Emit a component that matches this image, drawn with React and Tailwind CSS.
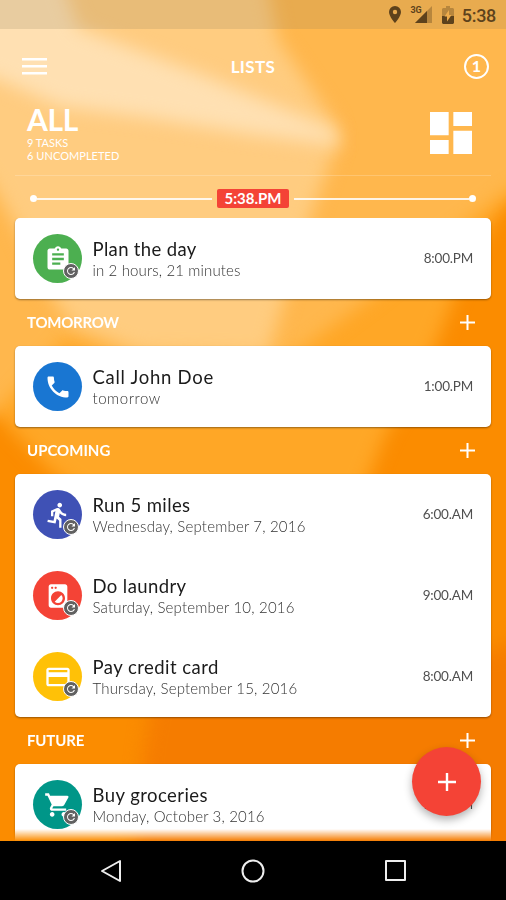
import {
  MdAssignment,
  MdCreditCard,
  MdDashboard,
  MdDirectionsRun,
  MdLocalLaundryService,
  MdPhone,
  MdRefresh,
  MdShoppingCart,
} from "react-icons/md";

const sections = [
  {
    id: "today",
    tasks: [
      { title: "Plan the day", titleClass: "tracking-[0.34px]", due: "in 2 hours, 21 minutes", dueClass: "tracking-[0.14px]", time: "8:00.PM", icon: MdAssignment, color: "bg-[#4caf50]", repeat: true },
    ],
  },
  {
    id: "tomorrow",
    label: "TOMORROW",
    labelClass: "tracking-[-0.25px]",
    tasks: [
      { title: "Call John Doe", titleClass: "tracking-[0.72px]", due: "tomorrow", dueClass: "tracking-[0.55px]", time: "1:00.PM", icon: MdPhone, color: "bg-[#1976d2]", repeat: false },
    ],
  },
  {
    id: "upcoming",
    label: "UPCOMING",
    labelClass: "tracking-[0px]",
    tasks: [
      { title: "Run 5 miles", titleClass: "tracking-[0.37px]", due: "Wednesday, September 7, 2016", dueClass: "tracking-[0.19px]", time: "6:00.AM", icon: MdDirectionsRun, color: "bg-[#3f51b5]", repeat: true },
      { title: "Do laundry", titleClass: "tracking-[0.4px]", due: "Saturday, September 10, 2016", dueClass: "tracking-[0.19px]", time: "9:00.AM", icon: MdLocalLaundryService, color: "bg-[#f44336]", repeat: true },
      { title: "Pay credit card", titleClass: "tracking-[0.46px]", due: "Thursday, September 15, 2016", dueClass: "tracking-[0.17px]", time: "8:00.AM", icon: MdCreditCard, color: "bg-[#ffc107]", repeat: true },
    ],
  },
  {
    id: "future",
    label: "FUTURE",
    labelClass: "tracking-[-0.15px]",
    tasks: [
      { title: "Buy groceries", titleClass: "tracking-[0.44px]", due: "Monday, October 3, 2016", dueClass: "tracking-[0.18px]", time: "9:00.AM", icon: MdShoppingCart, color: "bg-[#009688]", repeat: true },
    ],
  },
];

function Wallpaper() {
  return (
    <svg className="absolute inset-0" width="506" height="900" viewBox="0 0 506 900">
      <defs>
        <filter id="soft" x="-20%" y="-20%" width="140%" height="140%" colorInterpolationFilters="sRGB">
          <feGaussianBlur stdDeviation="9" />
        </filter>
      </defs>
      <rect width="506" height="900" fill="#fb8c00" />
      {/* each facet is blurred on its own so overlapping edges stay soft */}
      <path filter="url(#soft)" d="M-60 -60H580V150L506 204L468 260L436 345L385 435L360 500L90 500L50 470L0 418L-60 380Z" fill="#ffa726" />
      <path filter="url(#soft)" d="M-60 -60H580V150L506 192L430 250L370 298L300 350L270 365L150 365L65 338L22 385L-5 412L-60 400Z" fill="#ffb74d" />
      <path filter="url(#soft)" d="M-60 -60H258L278 40L334 122L337 145L318 195L300 250L284 300L268 355L140 352L72 325L50 294L18 230L-2 195L-60 110Z" fill="#ffcc80" />
      <path filter="url(#soft)" d="M-60 -60H48L78 28L200 74L336 130L340 146L250 134L150 118L60 106L0 80L-60 60Z" fill="#ffe0b2" />
      <path filter="url(#soft)" d="M580 590L500 650L400 660L155 690L145 745L125 960H580Z" fill="#f57c00" />
    </svg>
  );
}

function StatusBar() {
  return (
    <div className="flex h-[29px] shrink-0 items-center justify-end bg-[#8b7b5c]/20 pr-[10px] text-[#5d421c]">
      <svg width="12" height="17" viewBox="0 0 12 17" className="mr-[9px]">
        <path d="M6 0a6 6 0 0 0-6 6c0 4.500 6 11 6 11s6-6.500 6-11a6 6 0 0 0-6-6Zm0 8.200a2.200 2.200 0 1 1 0-4.400 2.200 2.200 0 0 1 0 4.400Z" fill="currentColor" />
      </svg>
      <span className="self-start pt-[5px] font-['Roboto'] text-[9px] leading-[10px] font-bold">3G</span>
      <svg width="17" height="17" viewBox="0 0 17 17" className="-ml-[7px] mr-[10px]">
        <path d="M17 0v17H0Z" fill="currentColor" opacity=".35" />
        <path d="M12 5v12H0Z" fill="currentColor" />
      </svg>
      <svg width="12" height="18" viewBox="0 0 12 18" className="mr-[8px]">
        <path d="M4 0h4v2h3l1 1v7H0V3l1-1h3Z" fill="currentColor" opacity=".35" />
        <path d="M0 10h12v7l-1 1H1l-1-1Z" fill="currentColor" />
        <path d="M7 4v5h2.500L5 15.500v-5H2.500Z" fill="#eeac4c" />
      </svg>
      <span className="pt-[2px] font-['Roboto'] text-[18px] leading-5 font-medium tracking-[-0.3px]">5:38</span>
    </div>
  );
}

function Plus({ size = 15, width = 2 }) {
  return (
    <svg width={size} height={size} viewBox={`0 0 ${size} ${size}`} stroke="#fff" strokeWidth={width}>
      <path d={`M0 ${size / 2}H${size}M${size / 2} 0V${size}`} />
    </svg>
  );
}

function TaskRow({ task }) {
  const Icon = task.icon;

  return (
    <div className="flex h-[81px] items-center pr-[18px] pl-[18px]">
      <div className={`relative flex size-[49px] shrink-0 items-center justify-center rounded-full ${task.color}`}>
        <Icon className="size-7 text-white" />
        {task.repeat && (
          <span className="absolute right-[3px] bottom-[4px] flex size-4 items-center justify-center rounded-full border-[1.5px] border-white bg-[#616161]">
            <MdRefresh className="size-3 shrink-0 text-white" />
          </span>
        )}
      </div>
      <div className="ml-[10.5px] flex-1 whitespace-nowrap">
        <p className={`text-[18.5px] leading-6 text-[#1b1b1b] ${task.titleClass}`}>{task.title}</p>
        <p className={`-mt-px mb-px text-[15px] leading-5 font-light text-[#333] ${task.dueClass}`}>{task.due}</p>
      </div>
      <span className="pb-px text-[13.5px] tracking-[-0.2px] text-[#505050]">{task.time}</span>
    </div>
  );
}

function Section({ section }) {
  return (
    <section>
      {section.label && (
        <div className="flex h-[47px] items-center justify-between pr-4 pl-3">
          <h2 className={`text-[15px] font-bold text-white ${section.labelClass}`}>{section.label}</h2>
          <Plus />
        </div>
      )}
      <div className="rounded-[5px] bg-white shadow-[0_1px_2px_rgba(0,0,0,0.4)]">
        {section.tasks.map((task) => (
          <TaskRow key={task.title} task={task} />
        ))}
      </div>
    </section>
  );
}

function NavBar() {
  return (
    <nav className="relative flex h-[59px] shrink-0 items-center justify-between bg-black pr-[100px] pl-[99.5px]">
      <svg width="22" height="24" viewBox="0 0 22 24" fill="none" stroke="#eee" strokeWidth="2" strokeLinejoin="round">
        <path d="M20 2V22L2 12Z" />
      </svg>
      <svg width="24" height="24" viewBox="0 0 24 24" fill="none" stroke="#eee" strokeWidth="2" className="-ml-px">
        <circle cx="12" cy="12" r="10.500" />
      </svg>
      <svg width="21" height="21" viewBox="0 0 21 21" fill="none" stroke="#eee" strokeWidth="2" strokeLinejoin="round">
        <rect x="1" y="1" width="19" height="19" />
      </svg>
    </nav>
  );
}

export default function App() {
  return (
    <div className="relative flex h-[900px] w-[506px] flex-col overflow-hidden font-['Lato','Noto_Sans',sans-serif]">
      <Wallpaper />
      <div className="relative flex min-h-0 flex-1 flex-col">
        <StatusBar />

        <header className="flex h-[75px] shrink-0 items-center justify-between pr-[17px] pl-[22px] text-white">
          <svg width="25" height="17" viewBox="0 0 25 17" fill="#fff">
            <path d="M0 0h25v2.600H0zM0 7h25v2.600H0zM0 14h25v2.600H0z" />
          </svg>
          <h1 className="mr-[5px] text-[17px] font-bold tracking-[0.4px]">LISTS</h1>
          <span className="flex size-[25px] items-center justify-center rounded-full border-2 border-white pb-px text-[16px] leading-none font-bold">1</span>
        </header>

        <div className="mx-[15px] flex h-[72px] shrink-0 justify-between border-b border-white/20 pr-3 pl-3 text-white">
          <div>
            <p className="-mt-px mb-px text-[30px] leading-[33px] font-bold tracking-[-0.3px]">ALL</p>
            <p className="-mt-px text-[11px] leading-[13px]">9 TASKS</p>
            <p className="text-[11px] leading-[13px] tracking-[0.05px]">6 UNCOMPLETED</p>
          </div>
          <MdDashboard className="mt-[1px] size-14" />
        </div>

        <div className="flex h-[42px] shrink-0 items-center px-[30px] pt-[3px]">
          <span className="size-[7px] rounded-full bg-white" />
          <span className="h-[2px] flex-1 bg-white/85" />
          <span className="mx-[5px] flex h-[19px] w-[72px] items-center justify-center rounded-[2px] bg-[#f44336] text-[15px] font-bold text-white">5:38.PM</span>
          <span className="h-[2px] flex-1 bg-white/85" />
          <span className="size-[7px] rounded-full bg-white" />
        </div>

        <main className="min-h-0 flex-1 overflow-hidden px-[15px] [mask-image:linear-gradient(to_bottom,#000_calc(100%-12px),transparent)]">
          {sections.map((section) => (
            <Section key={section.id} section={section} />
          ))}
        </main>
      </div>

      <NavBar />

      <button className="absolute right-[25px] bottom-[84px] flex size-[69px] items-center justify-center rounded-full bg-[#f44336] shadow-[0_4px_8px_rgba(0,0,0,0.3)]">
        <Plus size={18} width={2.4} />
      </button>
    </div>
  );
}
